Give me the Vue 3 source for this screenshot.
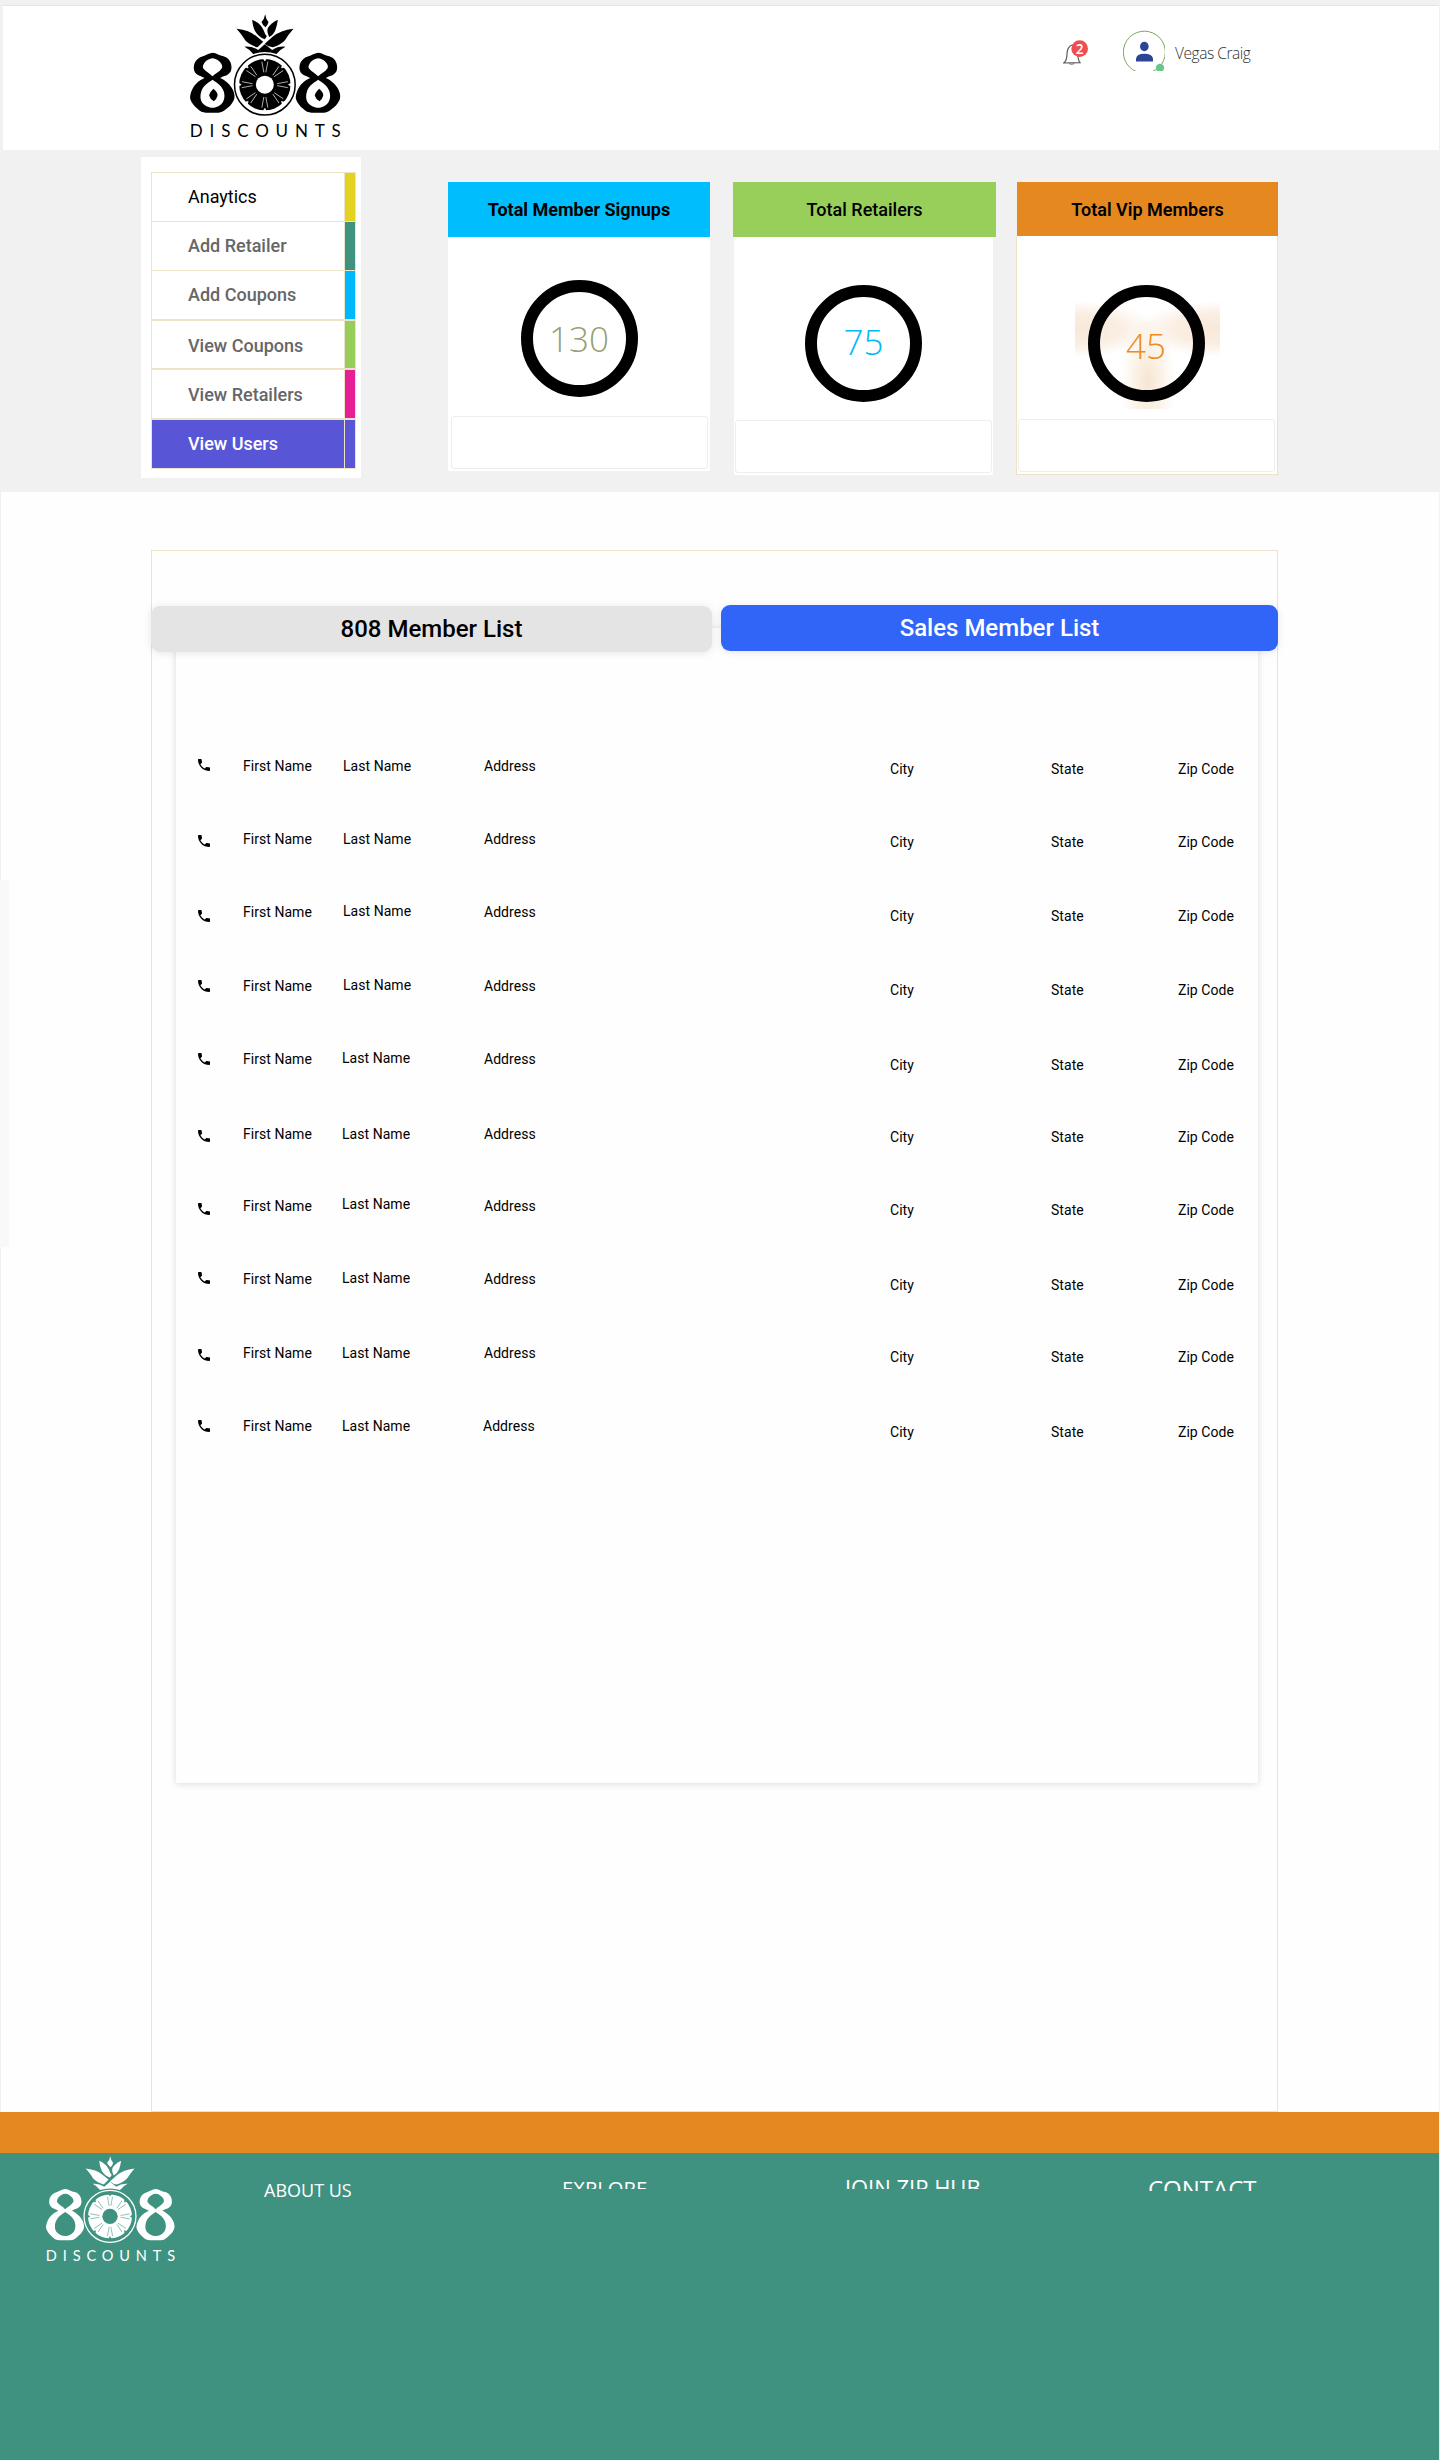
<script setup>
import { h } from 'vue'

const menu = [
  { label: 'Anaytics', color: '#e4d220', active: true, top: 0, height: 48, gap: 1 },
  { label: 'Add Retailer', color: '#3f9280', top: 0, height: 48, gap: 1 },
  { label: 'Add Coupons', color: '#00b9fd', top: 0, height: 48, gap: 2 },
  { label: 'View Coupons', color: '#97cd5b', top: 1, height: 47, gap: 2 },
  { label: 'View Retailers', color: '#e61f97', top: 1, height: 48, gap: 2 },
  { label: 'View Users', color: '#5856d6', selected: true, top: 0, height: 48, gap: 1 },
]

const cards = [
  { id: 'signups', title: 'Total Member Signups', value: '130' },
  { id: 'retailers', title: 'Total Retailers', value: '75' },
  { id: 'vip', title: 'Total Vip Members', value: '45' },
]

// Row heights and per-cell vertical nudges: [height, phone, first, last, address, city, last-name shift, address shift]
const rows = [
  [73, 1, 0, 0, 0, 3, 0, 0],
  [73, 4, 0, 0, 0, 3, 0, 0],
  [74, 6, 0, -1, 0, 4, 0, 0],
  [73, 2, 0, -1, 0, 4, 0, 0],
  [75, 2, 0, -1, 0, 6, -1, 0],
  [72, 4, 0, 0, 0, 3, -1, 0],
  [73, 5, 0, -2, 0, 4, -1, 0],
  [74, 1, 0, -1, 0, 6, -1, 0],
  [73, 4, 0, 0, 0, 4, -1, 0],
  [73, 2, 0, 0, 0, 6, -1, -1],
].map(([height, phone, first, last, address, city, lastX, addressX]) => ({
  height, phone, first, last, address, city, lastX, addressX,
}))

const at = (y, x = 0) => ({ marginTop: `${y}px`, marginLeft: `${x}px` })

const EIGHT =
  'M127 159C140 160 148 168 160 170C175 174 184 188 184 203C184 214 180 220 174 224C166 230 160 229 150 235C168 242 182 258 188 270C194 282 195 295 190 303C184 315 178 320 168 328C160 335 155 338 145 339H107C97 338 90 335 82 327C72 319 64 309 60 297C59 280 68 262 78 252C88 242 96 239 103 235C95 230 86 229 79 223C72 217 70 208 71 201C72 186 82 175 94 171C106 168 115 160 127 159Z' +
  'M127 176C118 176 108 183 103 189C98 196 97 202 99 206C106 216 118 221 127 230C136 221 148 217 155 206C158 200 155 194 151 189C146 183 137 176 127 176Z' +
  'M127 240C113 249 100 258 94 273C89 287 90 300 96 309C104 317 113 324 127 324C141 324 150 317 157 309C163 300 165 287 160 273C154 258 141 249 127 240Z'
const CROWN = [
  'M285 44Q287 59 295 67Q293 77 286 83Q277 76 274 67Q283 58 285 44Z',
  'M246 60Q272 72 280 91Q284 103 290 110L284 119Q265 112 255 95Q248 82 246 60Z',
  'M323 60Q302 70 293 85Q289 96 297 112Q311 104 316 90Q321 75 323 60Z',
  'M199 87Q240 92 259 110Q272 121 279 126L262 143Q238 136 225 122Q217 107 199 87Z',
  'M370 87Q330 92 309 110Q288 129 271 144L284 133Q295 143 308 143Q332 136 345 121Q354 105 370 87Z',
  'M223 141Q246 139 264 151L284 134L306 151Q324 139 346 141Q331 148 319 163Q284 151 249 163Q239 149 223 141Z',
]

const Logo = (props) =>
  h('svg', { viewBox: '60 40 455 375', fill: props.ink, role: 'img', 'aria-label': '808 Discounts' }, [
    ...CROWN.map((d) => h('path', { d })),
    h('path', { d: EIGHT, 'fill-rule': 'evenodd' }),
    h('path', { d: EIGHT, 'fill-rule': 'evenodd', transform: 'translate(317 0)' }),
    ...(props.seeds
      ? [0, 317].map((x) =>
          h('path', { d: 'M130 267Q144 279 142 288Q140 297 131 305Q119 297 117 288Q117 279 130 267Z', transform: `translate(${x} 0)` }))
      : []),
    h('circle', { cx: 284, cy: 255, r: 91, fill: props.paper, stroke: props.ink, 'stroke-width': 4.5 }),
    h('circle', { cx: 284, cy: 255, r: 77 }),
    h('circle', { cx: 284, cy: 255, r: 27, fill: props.paper }),
    ...[0, 45, 90, 135, 180, 225, 270, 315].map((a) =>
      h('g', { transform: `rotate(${a} 284 255)`, stroke: props.paper, fill: props.paper, 'stroke-width': 2 }, [
        h('path', { d: 'M275 186L281 218M293 186L287 218', fill: 'none' }),
        h('path', { d: 'M280 177H288L284 184Z' }),
      ])),
    h('text', {
      x: 59, y: 411, 'font-size': 51, 'font-family': 'Lato, sans-serif', textLength: 453, fill: props.ink,
    }, 'DISCOUNTS'),
  ])
Logo.props = ['ink', 'paper', 'seeds']
</script>

<template>
  <div class="page">
    <header class="topbar">
      <Logo class="logo" ink="#000" paper="#fff" :seeds="true" />
      <div class="bell">
        <svg width="25" height="26" viewBox="0 0 75 78">
          <path d="M2 69Q12 62 12 42Q13 20 27 15Q42 16 44 42Q45 60 51 68Z" fill="#fff" stroke="#55555c" stroke-width="3.500" />
          <path d="M18 71Q26 75 34 71" fill="none" stroke="#55555c" stroke-width="2.500" />
          <circle cx="50" cy="26" r="25" fill="#ef4e50" />
          <text x="50" y="41" text-anchor="middle" font-size="41" font-weight="600" font-family="Open Sans, sans-serif" fill="#fff">2</text>
        </svg>
      </div>
      <svg class="avatar" width="42" height="41" viewBox="0 0 126 122">
        <circle cx="64" cy="66" r="63" fill="#fff" stroke="#7da65c" stroke-width="3" />
        <ellipse cx="64" cy="49" rx="13" ry="14" fill="#2b4596" />
        <path d="M39 94V86Q41 71 64 71Q88 71 90 86V94Z" fill="#2b4596" />
        <circle cx="111" cy="113" r="12.500" fill="#69c58b" />
      </svg>
      <span class="user">Vegas Craig</span>
    </header>

    <section class="hero">
      <nav class="menu">
        <div class="menu-list">
          <div
            v-for="m in menu"
            :key="m.label"
            class="menu-item"
            :class="{ active: m.active, selected: m.selected }"
            :style="{ height: m.height + 'px', borderBottomWidth: m.gap + 'px' }"
          >
            <span class="menu-label" :style="{ paddingTop: m.top + 'px' }">{{ m.label }}</span>
            <span class="menu-swatch" :style="{ background: m.color }"></span>
          </div>
        </div>
      </nav>
      <article v-for="c in cards" :key="c.id" class="card" :class="c.id">
        <h2>{{ c.title }}</h2>
        <div class="card-body">
          <div class="ring"><span>{{ c.value }}</span></div>
          <div class="box"></div>
        </div>
      </article>
    </section>

    <main class="content">
      <div class="edge"></div>
      <section class="frame">
        <div class="tabs">
          <button class="tab grey">808 Member List</button>
          <button class="tab blue">Sales Member List</button>
        </div>
        <div class="list">
          <div v-for="(r, i) in rows" :key="i" class="row" :style="{ height: r.height + 'px' }">
            <svg class="phone" :style="{ marginTop: r.phone + 'px' }" width="12" height="12" viewBox="3 3 18 18">
              <path d="M6.620 10.790c1.440 2.830 3.760 5.140 6.590 6.590l2.200-2.200c.27-.27.67-.36 1.020-.24 1.120.37 2.330.57 3.570.57.55 0 1 .45 1 1V20c0 .55-.45 1-1 1-9.390 0-17-7.610-17-17 0-.55.45-1 1-1h3.500c.55 0 1 .45 1 1 0 1.250.2 2.450.57 3.570.11.35.03.74-.25 1.020l-2.200 2.200z" />
            </svg>
            <span :style="at(r.first)">First Name</span>
            <span :style="at(r.last, r.lastX)">Last Name</span>
            <span :style="at(r.address, r.addressX)">Address</span>
            <span :style="at(r.city)">City</span>
            <span :style="at(r.city)">State</span>
            <span :style="at(r.city)">Zip Code</span>
          </div>
        </div>
      </section>
    </main>

    <div class="stripe"></div>
    <footer class="footer">
      <Logo class="logo-small" ink="#fff" paper="#3f9280" :seeds="false" />
      <h3 class="about">ABOUT US</h3>
      <h3 class="explore">EXPLORE</h3>
      <h3 class="join">JOIN ZIP HUB</h3>
      <h3 class="contact">CONTACT</h3>
    </footer>
  </div>
</template>

<style>
body {
  margin: 0;
}
</style>

<style scoped>
* {
  box-sizing: border-box;
}
.page {
  width: 1440px;
  height: 2460px;
  overflow: hidden;
  background: #fefefe;
  font-family: Roboto, sans-serif;
  color: #000;
}
h2,
h3 {
  margin: 0;
}

/* Header */
.topbar {
  display: flex;
  align-items: flex-start;
  height: 150px;
  background: #fff;
  border-top: 5px solid #f1f1f1;
  border-left: 3px solid #f1f1f1;
  border-right: 1px solid #f1f1f1;
  box-shadow: inset 0 1px 0 #eee5cc;
}
.logo {
  width: 152px;
  height: 125px;
  margin: 8px 0 0 187px;
  flex: none;
  overflow: visible;
}
.bell {
  margin: 35px 0 0 721px;
  height: 26px;
}
.bell svg,
.avatar {
  display: block;
}
.avatar {
  margin: 25px 0 0 35px;
}
.user {
  margin: 36px 0 0 10px;
  font: 300 15.500px/24px 'Open Sans', sans-serif;
  letter-spacing: -0.45px;
  color: #333;
  white-space: nowrap;
}

/* Statistics band */
.hero {
  display: flex;
  align-items: flex-start;
  height: 342px;
  padding-left: 141px;
  background: #f1f1f1;
}
.menu {
  width: 220px;
  height: 321px;
  margin-top: 7px;
  padding: 15px 5px 0 10px;
  background: #fff;
}
.menu-list {
  border: 1px solid #ede3c8;
  border-bottom: 0;
}
.menu-item {
  display: flex;
  box-sizing: content-box;
  border-bottom: 1px solid #ede3c8;
  color: #666;
  font-size: 18px;
  font-weight: 500;
}
.menu-label {
  flex: 1;
  padding-left: 36px;
  line-height: 48px;
  height: 48px;
}
.menu-swatch {
  width: 11px;
  border-left: 1px solid #ede3c8;
}
.menu-item.active {
  color: #000;
  font-weight: 400;
}
.menu-item.selected {
  color: #fff;
  background: #5856d6;
}
.card {
  display: flex;
  flex-direction: column;
  width: 262px;
  margin: 32px 0 0 87px;
}
.card h2 {
  height: 55px;
  line-height: 55px;
  font-size: 18px;
  font-weight: 700;
  text-align: center;
  white-space: nowrap;
}
.card-body {
  display: flex;
  flex-direction: column;
  align-items: center;
  height: 234px;
  padding-top: 43.400px;
  background: #fff;
}
.ring {
  width: 117px;
  height: 117px;
  flex: none;
  border: 12px solid #000;
  border-radius: 50%;
  text-align: center;
  font: 300 35px/35px 'Open Sans', sans-serif;
}
.box {
  width: 257px;
  height: 53px;
  margin: 18.600px 0 0 0;
  flex: none;
  border: 1px solid #eee;
  border-radius: 3px;
}
.ring span {
  display: block;
}
.signups h2 {
  background: #00bdfd;
}
.signups .ring {
  color: #93a077;
}
.signups .ring span {
  padding-top: 29px;
}
.retailers {
  width: 263px;
  margin-left: 23px;
}
.retailers h2 {
  background: #97cf5a;
  font-weight: 500;
}
.retailers .card-body {
  width: 259px;
  height: 238px;
  margin-left: 1px;
  padding-top: 48.400px;
}
.retailers .ring {
  color: #00b9f5;
}
.retailers .ring span {
  padding-top: 27px;
}
.retailers .box {
  margin-top: 17.600px;
}
.vip {
  width: 262px;
  margin-left: 20px;
}
.vip h2 {
  height: 54px;
  line-height: 55px;
  margin-left: 1px;
  background: #e68820;
  font-weight: 600;
}
.vip .card-body {
  height: 239px;
  padding: 49.400px 2px 0 0;
  border: 1px solid #ede3c4;
  border-top: 0;
  background:
    radial-gradient(ellipse 27px 72px at 50% 70%, #f6e6d2 0, #faf0e3 40%, #fff0 100%) 101px 85px / 60px 88px no-repeat,
    radial-gradient(ellipse 82px 28px at 0 50%, #f8e8d9 0, #faeee2 55%, #fff0 100%) 58px 66px / 82px 54px no-repeat,
    radial-gradient(ellipse 82px 28px at 100% 50%, #f8e8d9 0, #faeee2 55%, #fff0 100%) 121px 66px / 82px 54px no-repeat,
    #fff;
}
.vip .ring {
  color: #ee8c20;
}
.vip .ring span {
  padding-top: 31px;
}
.vip .box {
  margin-top: 16.600px;
}

/* Member list */
.content {
  display: flex;
  align-items: flex-start;
  height: 1620px;
  padding-top: 58px;
  border-left: 1px solid #efefef;
  border-right: 1px solid #f3f3f3;
}
.edge {
  width: 9px;
  height: 367px;
  margin: 330px 0 0 -1px;
  background: #f9f9f9;
}
.frame {
  display: flex;
  flex-direction: column;
  width: 1127px;
  height: 1562px;
  margin-left: 142px;
  border: 1px solid #ede3c8;
}
.tabs {
  display: flex;
  gap: 9px;
  margin: 54px -1px 0;
  z-index: 1;
}
.tab {
  height: 46px;
  padding: 0;
  border: 0;
  border-radius: 9px;
  font: 500 24px/46px Roboto, sans-serif;
  box-shadow: 0 1px 8px rgba(0, 0, 0, 0.1);
}
.tab.grey {
  width: 561px;
  margin-top: 1px;
  background: #e4e4e4;
}
.tab.blue {
  width: 557px;
  background: #3165f7;
  color: #fff;
}
.list {
  width: 1082px;
  height: 1155px;
  margin: -24px 0 0 24px;
  padding: 130px 0 0 22px;
  background: #fefefe;
  box-shadow: 0 1px 7px rgba(0, 0, 0, 0.14);
  flex: none;
}
.row {
  display: grid;
  grid-template-columns: 45px 100px 141px 406px 161px 127px 80px;
  align-items: start;
  font-size: 14px;
  line-height: 0;
}
.row span {
  line-height: 16px;
  margin-bottom: -16px;
  letter-spacing: 0.04px;
  white-space: nowrap;
}

/* Footer */
.stripe {
  height: 41px;
  background: #e68820;
  border-right: 1px solid #f3f3f3;
}
.footer {
  display: flex;
  align-items: flex-start;
  height: 307px;
  background: #3f9280;
  border-right: 1px solid #e8e8e8;
  color: #fff;
}
.footer h3 {
  font-family: 'Open Sans', sans-serif;
  font-weight: 500;
  white-space: nowrap;
  overflow: hidden;
}
.logo-small {
  width: 130px;
  height: 107px;
  margin: 2px 0 0 46px;
  flex: none;
  overflow: visible;
}
.about {
  width: 110px;
  margin: 25px 0 0 88px;
  font-size: 18px;
  line-height: 24px;
}
.explore {
  width: 110px;
  height: 15px;
  margin: 21px 0 0 188px;
  font-size: 20.300px;
  line-height: 28px;
}
.join {
  width: 160px;
  height: 15px;
  margin: 21px 0 0 173px;
  font-size: 22px;
  line-height: 27px;
}
.contact {
  width: 140px;
  height: 17px;
  margin: 21px 0 0 143px;
  font-size: 24px;
  line-height: 30px;
}
</style>
